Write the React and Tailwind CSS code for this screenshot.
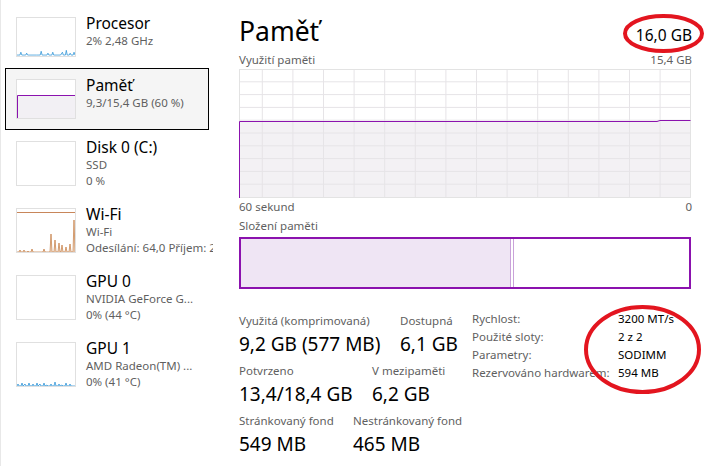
import React from "react";

const PURPLE = "#8b12ae";

function CpuThumb() {
  const pts = "0,39 3,39 4,36 5,39 9,39 10,37 11,39 20,39 24,39 25,35 26,39 31,39 32,37 33,39 36,39 37,36 38,39 45,39 47,36 48,39 50,39 51,34 52,39 54,39 55,37 56,39 58,39 59,36 60,39";
  return (
    <svg width="58" height="38" viewBox="0 0 60 40" preserveAspectRatio="none" className="block">
      <polyline points={pts} fill="#e3f0f9" stroke="#1a8ad4" strokeWidth="0.7" />
    </svg>
  );
}

function MemThumb() {
  return (
    <svg width="58" height="38" viewBox="0 0 58 38" className="block">
      <rect x="0" y="15" width="58" height="23" fill="#f2f0f4" />
      <polyline points="0.5,38 0.5,15.5 58,15.5" fill="none" stroke={PURPLE} strokeWidth="1" />
    </svg>
  );
}

function WifiThumb() {
  const pts = "0,43 2,43 3,41 4,43 6,43 7,41 8,43 10,43 11,42 12,43 14,43 15,40 16,43 26,43 27,40 28,43 33,43 34,25 35,43 37,43 38,31 39,43 41,43 42,34 43,43 44,43 45,36 46,43 48,43 49,38 50,43 52,43 53,35 54,43 56,43 57,11 58,43";
  return (
    <svg width="58" height="43" viewBox="0 0 58 43" preserveAspectRatio="none" className="block">
      <line x1="0" y1="3.5" x2="58" y2="3.5" stroke="#c8865a" strokeWidth="1" />
      <polyline points={pts} fill="#f6e6d8" stroke="#b8611c" strokeWidth="0.6" />
    </svg>
  );
}

function GpuThumb() {
  const pts = "0,43 1,41 2,43 4,43 5,40 6,43 8,41 9,43 11,43 12,40 13,43 15,43 16,41 17,43 19,43 20,40 21,43 23,41 24,43 26,43 27,40 28,43 30,42 31,43 33,43 34,41 35,43 37,43 38,39 39,43 41,43 42,41 43,43 45,42 46,43 48,43 49,40 50,43 52,43 53,41 54,43 58,43";
  return (
    <svg width="58" height="43" viewBox="0 0 58 43" preserveAspectRatio="none" className="block">
      <polyline points={pts} fill="#e3f0f9" stroke="#1a8ad4" strokeWidth="0.7" />
    </svg>
  );
}

function Item({ selected, thumb, thumbH, title, lines }) {
  return (
    <div
      className={`mx-[4px] flex items-start border py-[10px] pl-[10px] ${
        selected ? "border-black bg-[#f5f5f5]" : "border-transparent"
      }`}
    >
      <div
        className={`w-[60px] shrink-0 border border-[#e0e0e0] bg-white ${
          thumbH === 45 ? "h-[45px]" : "h-[40px]"
        }`}
      >
        {thumb}
      </div>
      <div className="-my-[4px] ml-[10px] min-w-0 whitespace-nowrap">
        <div className="text-[15.5px] leading-[20px] text-black">{title}</div>
        {lines.map((l, i) => (
          <div key={i} className="text-[11.5px] leading-[16px] text-[#5f5f5f]">
            {l}
          </div>
        ))}
      </div>
    </div>
  );
}

function UsageChart() {
  const W = 452;
  const H = 129;
  const vx = Array.from({ length: 14 }, (_, i) => 23.3 + i * 30.6);
  const hy = Array.from({ length: 9 }, (_, i) => (i + 1) * 12.8);
  return (
    <svg width={W} height={H} viewBox={`0 0 ${W} ${H}`} className="block">
      <rect x="0" y="0" width={W} height={H} fill="#ffffff" />
      <path d={`M0.5 52.5 L418 52.5 L421 51.5 L${W} 51.5 L${W} ${H} L0.5 ${H} Z`} fill="#f3f1f4" />
      {vx.map((x, i) => (
        <line key={"v" + i} x1={x} y1="0" x2={x} y2={H} stroke="#e6e4e7" strokeWidth="1" />
      ))}
      {hy.map((y, i) => (
        <line key={"h" + i} x1="0" y1={y} x2={W} y2={y} stroke="#e6e4e7" strokeWidth="1" />
      ))}
      <rect x="0.5" y="0.5" width={W - 1} height={H - 1} fill="none" stroke="#e3e3e3" strokeWidth="1" />
      <polyline
        points={`0.5,${H} 0.5,52.5 418,52.5 421,51.5 ${W - 0.5},51.5`}
        fill="none"
        stroke={PURPLE}
        strokeWidth="1"
      />
    </svg>
  );
}

function Stat({ label, value, w }) {
  return (
    <div className={`${w} shrink-0 whitespace-nowrap`}>
      <div className="text-[11.5px] leading-[16px] text-[#5f5f5f]">{label}</div>
      <div className="mt-[2px] text-[19px] leading-[26px] text-black">{value}</div>
    </div>
  );
}

export default function App() {
  return (
    <div
      className="relative flex h-[466px] w-[709px] overflow-hidden border-l border-[#e8e8e8] bg-white"
      style={{ fontFamily: '"Noto Sans", "Open Sans", sans-serif' }}
    >
      <div className="w-[212px] shrink-0 overflow-hidden pt-[6px]">
        <Item thumb={<CpuThumb />} title="Procesor" lines={["2%  2,48 GHz"]} />
        <Item selected thumb={<MemThumb />} title="Paměť" lines={["9,3/15,4 GB (60 %)"]} />
        <Item thumbH={45} thumb={null} title="Disk 0 (C:)" lines={["SSD", "0 %"]} />
        <Item
          thumbH={45}
          thumb={<WifiThumb />}
          title="Wi-Fi"
          lines={["Wi-Fi", "Odesílání: 64,0  Příjem: 24,0 kb/s"]}
        />
        <Item thumbH={45} thumb={null} title="GPU 0" lines={["NVIDIA GeForce G...", "0%  (44 °C)"]} />
        <Item thumbH={45} thumb={<GpuThumb />} title="GPU 1" lines={["AMD Radeon(TM) ...", "0%  (41 °C)"]} />
      </div>

      <div className="flex min-w-0 flex-1 flex-col pl-[26px] pr-[17px]">
        <div className="mt-[13px] flex items-baseline justify-between">
          <div className="text-[26.5px] leading-[36px] text-black">Paměť</div>
          <div className="text-[15.5px] leading-[20px] text-black">16,0 GB</div>
        </div>
        <div className="mt-[3px] flex items-baseline justify-between text-[11.5px] leading-[16px] text-[#5f5f5f]">
          <span>Využití paměti</span>
          <span>15,4 GB</span>
        </div>
        <div className="mt-[1px]">
          <UsageChart />
        </div>
        <div className="mt-[1px] flex justify-between text-[11.5px] leading-[16px] text-[#5f5f5f]">
          <span>60 sekund</span>
          <span>0</span>
        </div>
        <div className="mt-[3px] text-[11.5px] leading-[16px] text-[#5f5f5f]">Složení paměti</div>
        <div className="mt-[3px] flex h-[52px] w-[452px] border-2 border-[#8b12ae]">
          <div className="w-[270px] border-r border-[#c9a2d9] bg-[#efe5f4]" />
          <div className="w-[3px] border-r border-[#c9a2d9] bg-white" />
          <div className="flex-1 bg-white" />
        </div>

        <div className="mt-[24px] flex items-start">
          <div className="flex w-[233px] shrink-0 flex-col gap-[6px]">
            <div className="flex">
              <Stat w="w-[161px]" label="Využitá (komprimovaná)" value="9,2 GB (577 MB)" />
              <Stat w="w-auto" label="Dostupná" value="6,1 GB" />
            </div>
            <div className="flex">
              <Stat w="w-[133px]" label="Potvrzeno" value="13,4/18,4 GB" />
              <Stat w="w-auto" label="V mezipaměti" value="6,2 GB" />
            </div>
            <div className="flex">
              <Stat w="w-[114px]" label="Stránkovaný fond" value="549 MB" />
              <Stat w="w-auto" label="Nestránkovaný fond" value="465 MB" />
            </div>
          </div>
          <div className="-mt-[3px] grid grid-cols-[146px_auto] content-start items-start self-start whitespace-nowrap text-[11.5px] leading-[18px]">
            <span className="text-[#5f5f5f]">Rychlost:</span>
            <span className="text-black">3200 MT/s</span>
            <span className="text-[#5f5f5f]">Použité sloty:</span>
            <span className="text-black">2 z 2</span>
            <span className="text-[#5f5f5f]">Parametry:</span>
            <span className="text-black">SODIMM</span>
            <span className="text-[#5f5f5f]">Rezervováno hardwarem:</span>
            <span className="text-black">594 MB</span>
          </div>
        </div>
      </div>

      <svg
        className="pointer-events-none absolute left-0 top-0"
        width="709"
        height="466"
        viewBox="0 0 709 466"
      >
        <ellipse cx="662.5" cy="33.5" rx="38.5" ry="17.5" fill="none" stroke="#e3151f" strokeWidth="4" />
        <ellipse cx="641.5" cy="349.5" rx="56.5" ry="42.5" fill="none" stroke="#e3151f" strokeWidth="4" />
      </svg>
    </div>
  );
}
